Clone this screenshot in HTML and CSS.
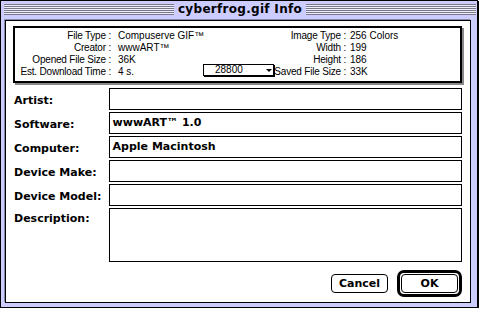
FILE: index.html
```html
<!DOCTYPE html>
<html lang="en">
<head>
  <meta charset="UTF-8" />
  <title>cyberfrog.gif Info</title>
  <link rel="stylesheet" href="styles.css">
</head>
<body>
  <div class="window">
    <div class="titlebar">
      <span class="stripes"></span>
      <span class="title">cyberfrog.gif Info</span>
      <span class="stripes"></span>
    </div>

    <div class="content">
      <div class="info">
        <span class="info-label">File Type :</span>
        <span class="info-value">Compuserve GIF™</span>
        <span class="info-label">Image Type :</span>
        <span class="info-value right">256 Colors</span>

        <span class="info-label">Creator :</span>
        <span class="info-value">wwwART™</span>
        <span class="info-label">Width :</span>
        <span class="info-value right">199</span>

        <span class="info-label">Opened File Size :</span>
        <span class="info-value">36K</span>
        <span class="info-label">Height :</span>
        <span class="info-value right">186</span>

        <span class="info-label">Est. Download Time :</span>
        <span class="info-value">4 s.
          <span class="popup"><span class="popup-text">28800</span><span class="popup-arrow"></span></span>
        </span>
        <span class="info-label">Saved File Size :</span>
        <span class="info-value right">33K</span>
      </div>

      <div class="fields">
        <div class="field">
          <label>Artist:</label>
          <div class="input"></div>
        </div>
        <div class="field">
          <label>Software:</label>
          <div class="input">wwwART™ 1.0</div>
        </div>
        <div class="field">
          <label>Computer:</label>
          <div class="input">Apple Macintosh</div>
        </div>
        <div class="field">
          <label>Device Make:</label>
          <div class="input"></div>
        </div>
        <div class="field">
          <label>Device Model:</label>
          <div class="input"></div>
        </div>
        <div class="field field-tall">
          <label>Description:</label>
          <div class="input"></div>
        </div>
      </div>

      <div class="buttons">
        <button class="btn">Cancel</button>
        <div class="default-ring"><button class="btn">OK</button></div>
      </div>
    </div>
  </div>
</body>
</html>
```

FILE: styles.css
```css
* {
  box-sizing: border-box;
}
body {
  margin: 0;
  background: #fff;
  color: #000;
  font-family: "DejaVu Sans", sans-serif;
}
.window {
  width: 478px;
  height: 308px;
  border: 1px solid #000;
  box-shadow: 1px 1px 0 #000;
  background: #ccccff;
}
.titlebar {
  height: 17px;
  display: flex;
  align-items: center;
  padding: 0 1px 0 3px;
}
.stripes {
  flex: 1;
  height: 11px;
  background: repeating-linear-gradient(to bottom, #777788 0 1px, #eeeeff 1px 2px);
}
.title {
  padding: 0 4px;
  font-weight: bold;
  font-size: 12px;
  letter-spacing: 0.3px;
  line-height: 17px;
}
.content {
  width: 466px;
  height: 283px;
  margin: 2px 6px 4px 4px;
  background: #fff;
  border: 1px solid #000;
  box-shadow: -1px -1px 0 #8888aa;
  padding: 5px 8px 0 7px;
}

/* file info box */
.info {
  width: 449px;
  height: 57px;
  border: 2px solid #000;
  box-shadow: 2px 2px 0 #888;
  padding-top: 2px;
  display: grid;
  grid-template-columns: 96px 163px 72px 1fr;
  grid-auto-rows: 12px;
  font-family: "Liberation Sans", sans-serif;
  font-size: 10px;
  line-height: 12px;
}
.info-label {
  display: flex;
  justify-content: flex-end;
  white-space: nowrap;
  letter-spacing: -0.2px;
}
.info-value {
  padding-left: 7px;
  display: flex;
  white-space: nowrap;
}
.info-value.right {
  padding-left: 4px;
}
.popup {
  margin-left: auto;
  margin-top: -2px;
  width: 71px;
  height: 12px;
  border: 1px solid #000;
  box-shadow: 1px 1px 0 #000;
  display: flex;
  align-items: center;
  padding: 0 1px 0 11px;
  line-height: 10px;
}
.popup-arrow {
  margin-left: auto;
  width: 0;
  height: 0;
  border-left: 3px solid transparent;
  border-right: 3px solid transparent;
  border-top: 3px solid #000;
}

/* edit fields */
.fields {
  margin: 5px 0 0 1px;
  display: flex;
  flex-direction: column;
  gap: 2px;
  font-weight: bold;
  font-size: 11px;
}
.field {
  display: flex;
  height: 22px;
}
.field label {
  width: 95px;
  line-height: 22px;
  padding-top: 2px;
}
.field .input {
  width: 355px;
  border: 1px solid #000;
  padding-left: 3px;
  line-height: 20px;
  white-space: nowrap;
}
.field-tall {
  height: 54px;
}
.field-tall label {
  padding-top: 0;
}

/* buttons */
.buttons {
  margin-top: 8px;
  display: flex;
  justify-content: flex-end;
  align-items: center;
  gap: 9px;
}
.btn {
  width: 57px;
  height: 19px;
  border: 1px solid #000;
  border-radius: 4px;
  background: #fff;
  color: #000;
  font-family: "DejaVu Sans", sans-serif;
  font-weight: bold;
  font-size: 11px;
  padding: 0;
}
.default-ring {
  border: 3px solid #000;
  border-radius: 7px;
  padding: 1px;
  display: flex;
}
```
